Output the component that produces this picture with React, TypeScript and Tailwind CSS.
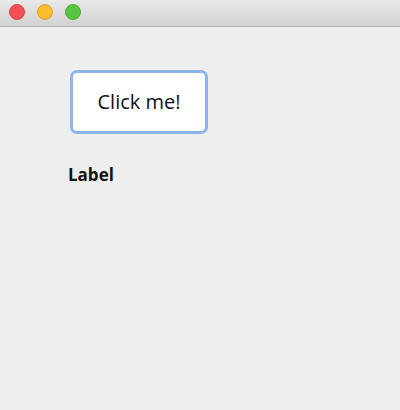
import React from 'react';

// macOS 风格窗口：标题栏 + 按钮 + 标签
const App: React.FC = () => {
  return (
    <div className="w-[400px] h-[410px] bg-[#eeeeee] flex flex-col font-['Open_Sans',sans-serif] overflow-hidden">
      {/* Title bar */}
      <div className="h-[27px] shrink-0 bg-gradient-to-b from-[#e9e9e9] to-[#d2d2d2] border-b border-[#b4b4b4] flex items-start gap-[12px] pl-[9px] pt-[4px]">
        <span className="w-[16px] h-[16px] rounded-full bg-[#f25056] border border-[#e0443e]" />
        <span className="w-[16px] h-[16px] rounded-full bg-[#fbbd2e] border border-[#e0a028]" />
        <span className="w-[16px] h-[16px] rounded-full bg-[#59c43d] border border-[#4aab2e]" />
      </div>

      <div className="flex flex-col items-start pl-[70px] pt-[43px]">
        <button className="w-[138px] h-[64px] bg-white border-[3px] border-[#8cb6ea] rounded-[7px] text-[20px] font-medium text-[#111] flex items-center justify-center">
          Click me!
        </button>
        <div className="mt-[30px] -ml-[2px] text-[17px] font-bold text-[#111] leading-[22px]">Label</div>
      </div>
    </div>
  );
};

export default App;
